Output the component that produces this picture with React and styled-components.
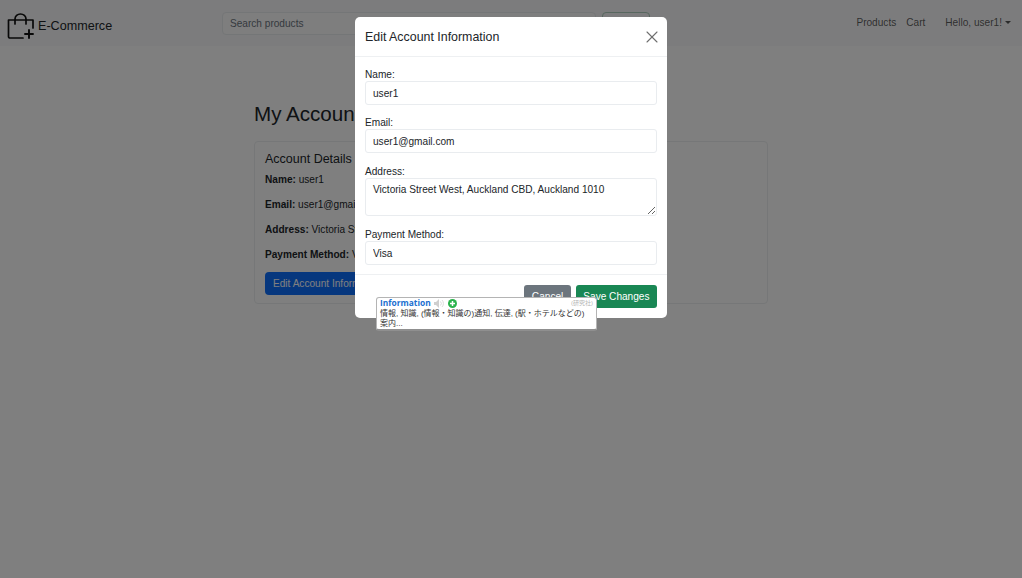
import React from 'react';
import styled, { createGlobalStyle } from 'styled-components';
import { X } from 'lucide-react';

const GlobalStyle = createGlobalStyle`
  * { box-sizing: border-box; }
  html, body { margin: 0; height: 100%; }
  body {
    background: #fff;
    color: #212529;
    font-family: "Liberation Sans", Arial, sans-serif;
    font-size: 10.1px;
    line-height: 16px;
  }
`;

const Page = styled.div`
  position: relative;
  width: 1022px;
  height: 578px;
  overflow: hidden;
`;

const Navbar = styled.nav`
  height: 46px;
  background: #f8f9fa;
  display: flex;
  align-items: center;
  padding: 0 11px 0 7px;
`;

const Brand = styled.a`
  display: flex;
  align-items: center;
  gap: 3px;
  width: 215px;
  padding-top: 6px;
  font-size: 12.6px;
  color: #212529;
`;

const SearchForm = styled.form`
  display: flex;
  gap: 6px;
`;

const SearchInput = styled.input`
  width: 374px;
  height: 23px;
  padding: 0 7px;
  border: 1px solid #e9ecef;
  border-radius: 4px;
  background: #fcfcfc;
  font: inherit;
  &::placeholder { color: #6c757d; }
`;

const SearchButton = styled.button`
  width: 48px;
  height: 23px;
  border: 1px solid #aecfbe;
  border-radius: 4px;
  background: transparent;
  color: #198754;
  font: inherit;
`;

const NavLinks = styled.div`
  margin-left: auto;
  display: flex;
  align-items: center;
  color: rgba(0, 0, 0, 0.65);
`;

const NavLink = styled.a`
  margin-left: ${p => p.$gap || 0}px;
`;

const Caret = styled.span`
  display: inline-block;
  margin-left: 3px;
  vertical-align: 2px;
  border-top: 3px solid;
  border-left: 3px solid transparent;
  border-right: 3px solid transparent;
`;

const Main = styled.main`
  width: 514px;
  margin: 0 0 0 254px;
  padding-top: 54px;
`;

const Heading = styled.h1`
  margin: 0 0 14px;
  font-size: 20.6px;
  font-weight: 400;
  line-height: 27px;
`;

const Card = styled.section`
  height: 163px;
  padding: 9px 10px;
  border: 1px solid #eceef0;
  border-radius: 4px;
`;

const CardTitle = styled.h5`
  margin: 0 0 5px;
  font-size: 12.5px;
  font-weight: 400;
  line-height: 16px;
`;

const Detail = styled.p`
  margin: 0 0 9px;
  white-space: nowrap;
  b { font-weight: 700; }
`;

const PrimaryButton = styled.button`
  height: 23px;
  padding: 0 8px;
  border: 0;
  border-radius: 4px;
  background: #0d6efd;
  color: #fff;
  font: inherit;
`;

const Backdrop = styled.div`
  position: absolute;
  inset: 0;
  background: rgba(0, 0, 0, 0.5);
`;

const Modal = styled.div`
  position: absolute;
  left: 355px;
  top: 17px;
  width: 312px;
  height: 301px;
  background: #fff;
  border-radius: 5px;
  display: flex;
  flex-direction: column;
`;

const ModalHeader = styled.header`
  height: 40px;
  flex: none;
  display: flex;
  align-items: center;
  justify-content: space-between;
  padding: 0 5px 0 10px;
  border-bottom: 1px solid #eef0f2;
`;

const ModalTitle = styled.h5`
  margin: 0;
  font-size: 12.4px;
  font-weight: 400;
  color: #212529;
`;

const CloseButton = styled.button`
  display: flex;
  padding: 0;
  border: 0;
  background: none;
  color: #6e6e6e;
`;

const ModalBody = styled.form`
  flex: 1;
  padding: 9px 10px 0;
`;

const Field = styled.div`
  margin-bottom: ${p => p.$space ?? 10}px;
`;

const Label = styled.label`
  display: block;
  height: 15px;
  line-height: 17px;
`;

const Input = styled.input`
  display: block;
  width: 100%;
  height: 24px;
  padding: 0 7px;
  border: 1px solid #e9ecef;
  border-radius: 3px;
  color: #212529;
  font: inherit;
`;

const TextArea = styled.textarea`
  display: block;
  width: 100%;
  height: 38px;
  padding: 3px 7px;
  border: 1px solid #e9ecef;
  border-radius: 3px;
  color: #212529;
  font: inherit;
  line-height: 16px;
`;

const ModalFooter = styled.footer`
  height: 44px;
  flex: none;
  display: flex;
  justify-content: flex-end;
  gap: 5px;
  padding: 10px 10px 0;
  border-top: 1px solid #eef0f2;
`;

const FooterButton = styled.button`
  height: 23px;
  padding: 0 7.5px;
  border: 0;
  border-radius: 3px;
  background: ${p => p.$save ? '#198754' : '#6c757d'};
  color: #fff;
  font: inherit;
`;

const Popup = styled.div`
  position: absolute;
  left: 376px;
  top: 297px;
  width: 221px;
  height: 34px;
  padding: 0 3px;
  background: #fff;
  border: 1px solid #b4b4b4;
  border-bottom: 2px solid #8f8f8f;
  border-radius: 3px;
  font-size: 8px;
  line-height: 10px;
  color: #333;
  font-family: "Liberation Sans", "Noto Sans CJK JP", sans-serif;
`;

const PopupHead = styled.div`
  display: flex;
  align-items: center;
  gap: 3px;
  height: 10px;
`;

const PopupWord = styled.span`
  color: #1a6fd0;
  font-size: 8.4px;
  font-weight: 700;
  font-family: "Open Sans", sans-serif;
`;

const PopupSource = styled.span`
  margin-left: auto;
  color: #b5b5b5;
  font-size: 6px;
`;

const PopupText = styled.div`
  padding-top: 1px;
`;

const BagIcon = () => (
  <svg width="28" height="27" viewBox="0 0 28 27" fill="none" stroke="#111" strokeWidth="1.7" strokeLinecap="round" strokeLinejoin="round">
    <path d="M16 25H3a1.5 1.5 0 0 1-1.5-1.5V7H26V15" />
    <path d="M8 11V6a5.5 5 0 0 1 11 0v5" />
    <path d="M22 17v8M18 21h8" strokeWidth="1.9" />
  </svg>
);

const SpeakerIcon = () => (
  <svg width="11" height="9" viewBox="0 0 11 9" fill="#cfcfcf">
    <path d="M0 3h2l3-3v9L2 6H0z" />
    <path d="M6.5 2.5a3 3 0 0 1 0 4M8 1a5 5 0 0 1 0 7" stroke="#dcdcdc" fill="none" />
  </svg>
);

const AddIcon = () => (
  <svg width="9" height="9" viewBox="0 0 9 9">
    <circle cx="4.5" cy="4.5" r="4.5" fill="#2bb24c" />
    <path d="M4.5 2v5M2 4.5h5" stroke="#fff" strokeWidth="1.5" />
  </svg>
);

const noop = () => {};

const App = () => {
  return (
    <Page>
      <GlobalStyle />
      <Navbar>
        <Brand>
          <BagIcon />
          E-Commerce
        </Brand>
        <SearchForm>
          <SearchInput placeholder="Search products" />
          <SearchButton type="button">Search</SearchButton>
        </SearchForm>
        <NavLinks>
          <NavLink>Products</NavLink>
          <NavLink $gap={10}>Cart</NavLink>
          <NavLink $gap={20}>Hello, user1!<Caret /></NavLink>
        </NavLinks>
      </Navbar>
      <Main>
        <Heading>My Account</Heading>
        <Card>
          <CardTitle>Account Details</CardTitle>
          <Detail><b>Name:</b> user1</Detail>
          <Detail><b>Email:</b> user1@gmail.com</Detail>
          <Detail><b>Address:</b> Victoria Street West, Auckland CBD, Auckland 1010</Detail>
          <Detail><b>Payment Method:</b> Visa</Detail>
          <PrimaryButton>Edit Account Information</PrimaryButton>
        </Card>
      </Main>
      <Backdrop />
      <Modal>
        <ModalHeader>
          <ModalTitle>Edit Account Information</ModalTitle>
          <CloseButton><X size={20} strokeWidth={1.3} /></CloseButton>
        </ModalHeader>
        <ModalBody>
          <Field $space={9}>
            <Label>Name:</Label>
            <Input value="user1" onChange={noop} />
          </Field>
          <Field>
            <Label>Email:</Label>
            <Input value="user1@gmail.com" onChange={noop} />
          </Field>
          <Field>
            <Label>Address:</Label>
            <TextArea value="Victoria Street West, Auckland CBD, Auckland 1010" onChange={noop} />
          </Field>
          <Field $space={0}>
            <Label>Payment Method:</Label>
            <Input value="Visa" onChange={noop} />
          </Field>
        </ModalBody>
        <ModalFooter>
          <FooterButton type="button">Cancel</FooterButton>
          <FooterButton type="button" $save>Save Changes</FooterButton>
        </ModalFooter>
      </Modal>
      <Popup>
        <PopupHead>
          <PopupWord>Information</PopupWord>
          <SpeakerIcon />
          <AddIcon />
          <PopupSource>(研究社)</PopupSource>
        </PopupHead>
        <PopupText>情報, 知識, (情報・知識の)通知, 伝達, (駅・ホテルなどの)<br />案内...</PopupText>
      </Popup>
    </Page>
  );
};

export default App;
